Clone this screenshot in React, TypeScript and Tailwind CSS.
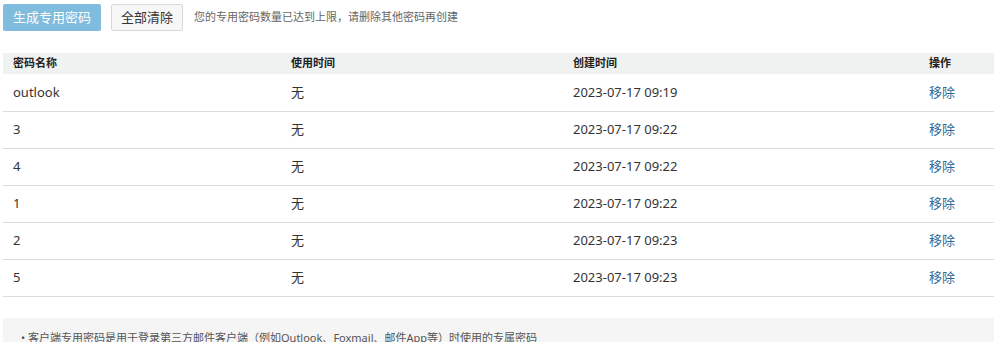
const rows = [
  { name: 'outlook', used: '无', created: '2023-07-17 09:19' },
  { name: '3', used: '无', created: '2023-07-17 09:22' },
  { name: '4', used: '无', created: '2023-07-17 09:22' },
  { name: '1', used: '无', created: '2023-07-17 09:22' },
  { name: '2', used: '无', created: '2023-07-17 09:23' },
  { name: '5', used: '无', created: '2023-07-17 09:23' },
];

export default function App() {
  return (
    <div
      className="bg-white text-[#333] pl-[3px] pt-[4px]"
      style={{ fontFamily: '"Noto Sans", "Noto Sans CJK SC", sans-serif' }}
    >
      {/* 顶部操作 */}
      <div className="flex items-center h-[27px]">
        <button className="h-[27px] w-[98px] rounded-[2px] bg-[#80bcdd] text-white text-[13px] leading-none">
          生成专用密码
        </button>
        <button className="ml-[10px] h-[27px] w-[72px] rounded-[2px] border border-[#d9d9d9] bg-[#f7f7f7] text-[#333] text-[13px] leading-none">
          全部清除
        </button>
        <span className="ml-[11px] text-[11px] text-[#666]">您的专用密码数量已达到上限，请删除其他密码再创建</span>
      </div>

      {/* 密码列表 */}
      <table className="mt-[22px] w-full border-collapse table-fixed">
        <colgroup>
          <col className="w-[278px]" />
          <col className="w-[282px]" />
          <col className="w-[356px]" />
          <col />
        </colgroup>
        <thead>
          <tr className="bg-[#f0f2f2] h-[21px] text-[11px] text-[#222]">
            <th className="text-left pl-[10px] font-bold">密码名称</th>
            <th className="text-left pl-[10px] font-bold">使用时间</th>
            <th className="text-left pl-[10px] font-bold">创建时间</th>
            <th className="text-left pl-[10px] font-bold">操作</th>
          </tr>
        </thead>
        <tbody>
          {rows.map((r, i) => (
            <tr key={i} className="h-[37px] border-b border-[#dcdcdc] text-[13px]">
              <td className="pl-[10px]">{r.name}</td>
              <td className="pl-[10px]">{r.used}</td>
              <td className="pl-[10px]">{r.created}</td>
              <td className="pl-[10px] text-[#2d6a9a]">移除</td>
            </tr>
          ))}
        </tbody>
      </table>

      {/* 说明 */}
      <div className="mt-[21px] bg-[#f5f5f5] px-[18px] pt-[12px] pb-[12px] text-[11px] text-[#555]">
        <p>• 客户端专用密码是用于登录第三方邮件客户端（例如Outlook、Foxmail、邮件App等）时使用的专属密码</p>
      </div>
    </div>
  );
}
